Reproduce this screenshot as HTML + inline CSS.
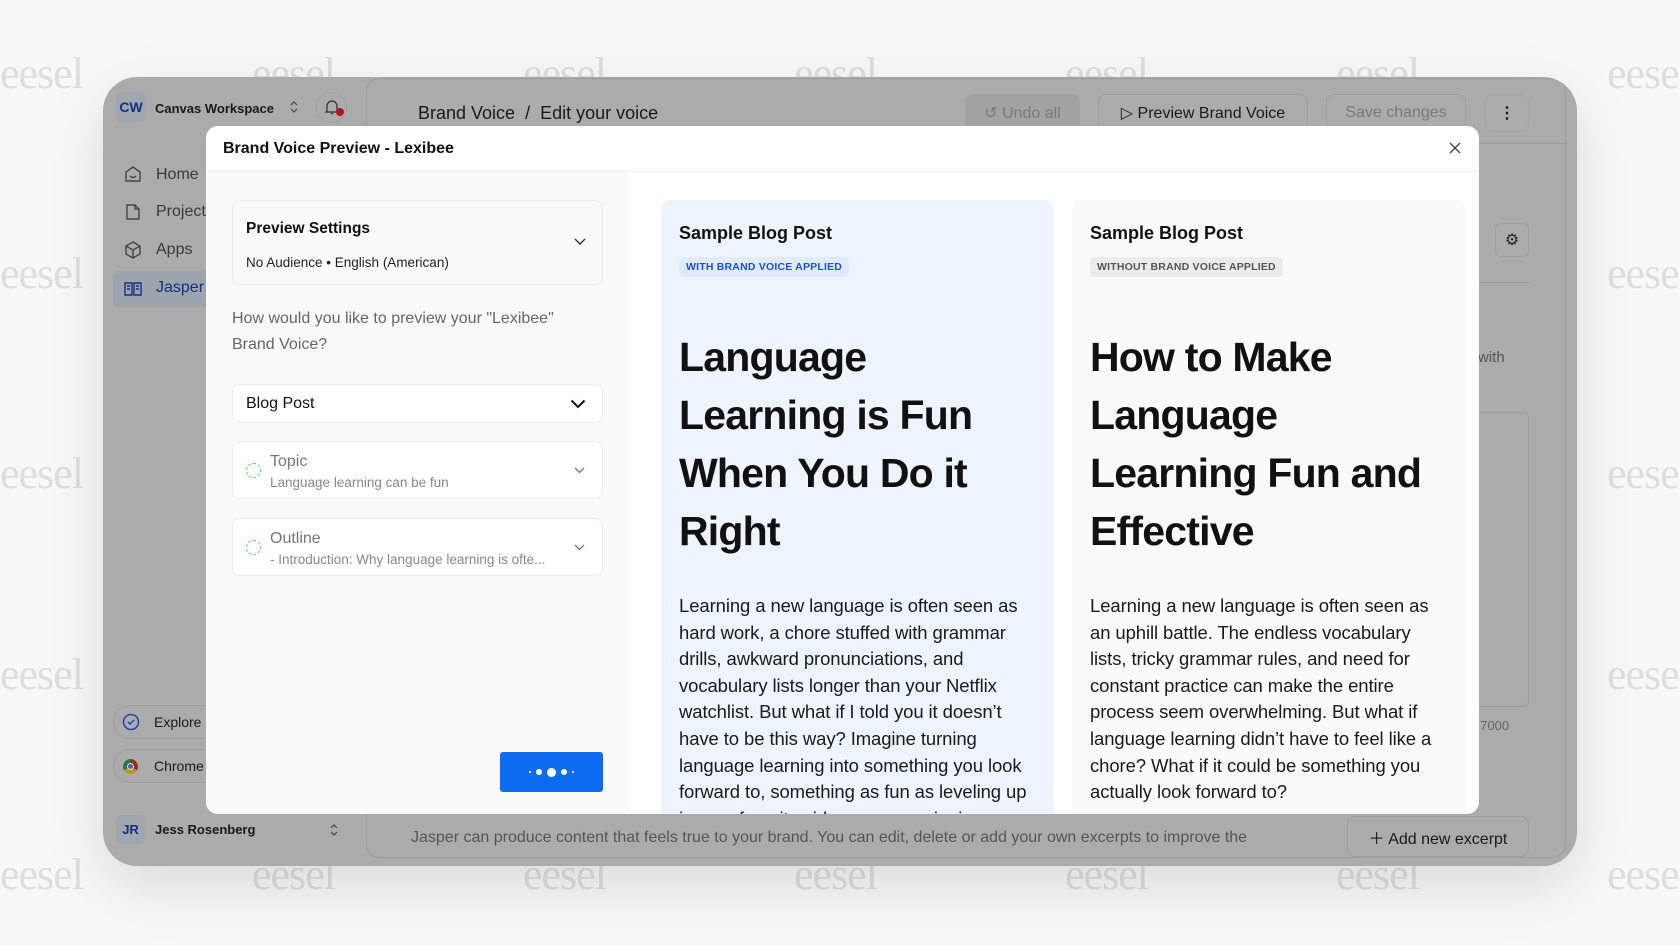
<!DOCTYPE html>
<html><head><meta charset="utf-8"><style>
*{box-sizing:border-box;margin:0;padding:0}
body{width:1680px;height:945px;overflow:hidden;background:#f8f8f7;font-family:"Liberation Sans",sans-serif;position:relative;color:#111}
.a{position:absolute}
.wm{position:absolute;font-family:"Liberation Serif",serif;font-size:44px;color:#dedede;letter-spacing:-1px}
.win{position:absolute;left:103px;top:77px;width:1474px;height:789px;background:#ababab;border-radius:34px;box-shadow:0 20px 60px rgba(0,0,0,.12);overflow:hidden}
.t{position:absolute;white-space:nowrap}
.btn{position:absolute;border-radius:8px;border:1px solid #9f9f9f;font-size:16px;display:flex;align-items:center;justify-content:center;gap:8px}
.modal{position:absolute;left:206px;top:126px;width:1273px;height:688px;background:#fff;border-radius:12px;overflow:hidden}
.card{position:absolute;border:1px solid #ececec;border-radius:8px;background:#fff}
.dash{position:absolute;width:15px;height:15px;border:1.5px dashed #52d45a;border-radius:50%}
.chev{position:absolute}
.blog{position:absolute;top:74px;width:393px;height:640px;border-radius:10px;padding:23px 17px 21px 18px}
.blog h3{font-size:18px;font-weight:600;margin-bottom:13px}
.badge{display:inline-block;font-size:10.5px;font-weight:700;padding:4px 7px;border-radius:4px;letter-spacing:.2px}
.blog h1{font-size:41px;font-weight:700;line-height:58px;margin-top:51px;letter-spacing:-.8px}
.blog p{font-size:18.5px;line-height:26.6px;margin-top:33px;color:#1a1a1a;letter-spacing:-.1px}
</style></head><body>
<div class="wm" style="left:0;top:48px">eesel</div>
<div class="wm" style="left:0;top:248px">eesel</div>
<div class="wm" style="left:0;top:448px">eesel</div>
<div class="wm" style="left:0;top:649px">eesel</div>
<div class="wm" style="left:0;top:849px">eesel</div>
<div class="wm" style="left:1607px;top:48px">eesel</div>
<div class="wm" style="left:1607px;top:248px">eesel</div>
<div class="wm" style="left:1607px;top:448px">eesel</div>
<div class="wm" style="left:1607px;top:649px">eesel</div>
<div class="wm" style="left:1607px;top:849px">eesel</div>
<div class="wm" style="left:252px;top:48px">eesel</div><div class="wm" style="left:523px;top:48px">eesel</div><div class="wm" style="left:794px;top:48px">eesel</div><div class="wm" style="left:1065px;top:48px">eesel</div><div class="wm" style="left:1336px;top:48px">eesel</div>
<div class="wm" style="left:252px;top:849px">eesel</div><div class="wm" style="left:523px;top:849px">eesel</div><div class="wm" style="left:794px;top:849px">eesel</div><div class="wm" style="left:1065px;top:849px">eesel</div><div class="wm" style="left:1336px;top:849px">eesel</div>

<div class="win">
 <div class="a" style="left:13px;top:15px;width:30px;height:30px;background:#9fa6b0;border-radius:5px;color:#13307a;font-size:14px;font-weight:700;display:flex;align-items:center;justify-content:center">CW</div>
 <div class="t" style="left:52px;top:24px;font-size:13px;font-weight:700;color:#1a1a1a">Canvas Workspace</div>
 <svg class="a" style="left:186px;top:23px" width="10" height="14"><path d="M2 5l3-3 3 3M2 9l3 3 3-3" fill="none" stroke="#444" stroke-width="1.2"/></svg>
 <div class="a" style="left:213px;top:15px;width:31px;height:31px;border-radius:50%;border:1px solid #9f9f9f"></div>
 <svg class="a" style="left:221px;top:21px" width="16" height="18"><path d="M3 13V8a5 5 0 0 1 10 0v5l1 1H2zM7 15.5h2" fill="none" stroke="#333" stroke-width="1.3"/></svg>
 <div class="a" style="left:233px;top:31px;width:8px;height:8px;border-radius:50%;background:#b3141c"></div>
 <div class="a" style="left:263px;top:1px;width:1200px;height:780px;border:1px solid #9d9d9d;border-radius:14px"></div>
 <div class="t" style="left:315px;top:26px;font-size:18px;color:#1a1a1a">Brand Voice &nbsp;/&nbsp; Edit your voice</div>
 <div class="btn" style="left:862px;top:17px;width:115px;height:38px;background:#a2a2a2;border-color:#a2a2a2;color:#7a7a7a">↺ Undo all</div>
 <div class="btn" style="left:995px;top:17px;width:210px;height:38px;color:#1a1a1a">▷ Preview Brand Voice</div>
 <div class="btn" style="left:1223px;top:17px;width:140px;height:38px;color:#7a7a7a">Save changes</div>
 <div class="btn" style="left:1382px;top:17px;width:44px;height:38px;color:#1a1a1a;border-color:#a5a5a5;font-weight:700">⋮</div>
 <div class="a" style="left:264px;top:66px;width:1200px;height:1px;background:#9d9d9d"></div>
 <div class="t" style="left:53px;top:89px;font-size:16px;color:#3a3a3a">Home</div>
 <div class="t" style="left:53px;top:126px;font-size:16px;color:#3a3a3a">Projects</div>
 <div class="t" style="left:53px;top:164px;font-size:16px;color:#3a3a3a">Apps</div>
 <div class="a" style="left:10px;top:194px;width:120px;height:36px;background:#9ea4ad;border-radius:6px"></div>
 <div class="t" style="left:53px;top:202px;font-size:16px;color:#143080">Jasper</div>
 <svg class="a" style="left:21px;top:88px" width="18" height="18"><path d="M2 7l7-5 7 5v9H2z M6 11q3 3 6 0" fill="none" stroke="#444" stroke-width="1.4"/></svg>
 <svg class="a" style="left:21px;top:126px" width="18" height="18"><path d="M3 2h8l4 4v10H3z M11 2v4h4" fill="none" stroke="#444" stroke-width="1.4"/></svg>
 <svg class="a" style="left:21px;top:164px" width="18" height="18"><path d="M9 1l7 4v8l-7 4-7-4V5z M2 5l7 4 7-4 M9 9v8" fill="none" stroke="#444" stroke-width="1.4"/></svg>
 <svg class="a" style="left:21px;top:203px" width="18" height="18"><path d="M1 3h7v12H1z M10 3h7v12h-7z M3 6h3M3 9h3M12 6h3M12 9h3" fill="none" stroke="#143080" stroke-width="1.4"/></svg>
 <div class="a" style="left:10px;top:628px;width:120px;height:34px;border:1px solid #9f9f9f;border-radius:17px"></div>
 <svg class="a" style="left:19px;top:636px" width="18" height="18"><circle cx="9" cy="9" r="7.5" fill="none" stroke="#1d46b0" stroke-width="1.5"/><path d="M6 9l2 2 4-4" fill="none" stroke="#1d46b0" stroke-width="1.5"/></svg>
 <div class="t" style="left:51px;top:637px;font-size:14px;color:#1a1a1a">Explore</div>
 <div class="a" style="left:10px;top:672px;width:120px;height:34px;border:1px solid #9f9f9f;border-radius:17px"></div>
 <div class="a" style="left:20px;top:682px;width:15px;height:15px;border-radius:50%;background:conic-gradient(#9e2a22 0 120deg,#b99420 120deg 240deg,#2a7a3a 240deg)"></div>
 <div class="a" style="left:24px;top:686px;width:7px;height:7px;border-radius:50%;background:#3f66a8;border:1px solid #ddd"></div>
 <div class="t" style="left:51px;top:681px;font-size:14px;color:#1a1a1a">Chrome</div>
 <div class="a" style="left:13px;top:738px;width:29px;height:29px;background:#9fa6b0;border-radius:5px;color:#13307a;font-size:13px;font-weight:700;display:flex;align-items:center;justify-content:center">JR</div>
 <div class="t" style="left:52px;top:745px;font-size:13px;font-weight:700;color:#1a1a1a">Jess Rosenberg</div>
 <svg class="a" style="left:226px;top:746px" width="10" height="14"><path d="M2 5l3-3 3 3M2 9l3 3 3-3" fill="none" stroke="#444" stroke-width="1.2"/></svg>
 <div class="a" style="left:1392px;top:146px;width:34px;height:34px;border:1px solid #9f9f9f;border-radius:6px;display:flex;align-items:center;justify-content:center;font-size:16px;color:#222">⚙</div>
 <div class="a" style="left:1375px;top:205px;width:51px;height:1px;background:#9d9d9d"></div>
 <div class="t" style="left:1375px;top:272px;font-size:15px;color:#555">with</div>
 <div class="a" style="left:1360px;top:335px;width:66px;height:295px;border:1px solid #9d9d9d;border-radius:6px"></div>
 <div class="t" style="left:1370px;top:641px;font-size:13px;color:#666">/ 7000</div>
 <div class="t" style="left:308px;top:752px;font-size:16px;color:#555">Jasper can produce content that feels true to your brand. You can edit, delete or add your own excerpts to improve the</div>
 <div class="btn" style="left:1244px;top:739px;width:182px;height:41px;color:#1a1a1a;font-size:16px">＋ Add new excerpt</div>
</div>

<div class="modal">
 <div class="t" style="left:17px;top:14px;font-size:16px;font-weight:600">Brand Voice Preview - Lexibee</div>
 <svg class="a" style="left:1243px;top:16px" width="12" height="12"><path d="M1 1l10 10M11 1L1 11" stroke="#444" stroke-width="1.4"/></svg>
 <div class="a" style="left:0;top:45px;width:1273px;height:1px;background:#efefef"></div>
 <div class="a" style="left:0;top:46px;width:424px;height:642px;background:#fafafa"></div>
 <div class="card" style="left:26px;top:74px;width:371px;height:85px;background:#fafafa"></div>
 <div class="t" style="left:40px;top:94px;font-size:15.5px;font-weight:600">Preview Settings</div>
 <div class="t" style="left:40px;top:129px;font-size:13.5px;color:#222">No Audience • English (American)</div>
 <svg class="chev" style="left:368px;top:112px" width="12" height="8"><path d="M1 1l5 5 5-5" fill="none" stroke="#333" stroke-width="1.4"/></svg>
 <div class="t" style="left:26px;top:180px;font-size:16px;color:#666;line-height:26px">How would you like to preview your "Lexibee"<br>Brand Voice?</div>
 <div class="card" style="left:26px;top:258px;width:371px;height:39px"></div>
 <div class="t" style="left:40px;top:269px;font-size:16px;color:#111">Blog Post</div>
 <svg class="chev" style="left:364px;top:273px" width="16" height="10"><path d="M1.5 1.5l6.5 6.5 6.5-6.5" fill="none" stroke="#111" stroke-width="2"/></svg>
 <div class="card" style="left:26px;top:315px;width:371px;height:58px"></div>
 <div class="dash" style="left:40px;top:337px"></div>
 <div class="t" style="left:64px;top:327px;font-size:16px;color:#777">Topic</div>
 <div class="t" style="left:64px;top:349px;font-size:13.5px;color:#888">Language learning can be fun</div>
 <svg class="chev" style="left:368px;top:341px" width="11" height="7"><path d="M1 1l4.5 4.5 4.5-4.5" fill="none" stroke="#777" stroke-width="1.3"/></svg>
 <div class="card" style="left:26px;top:392px;width:371px;height:58px"></div>
 <div class="dash" style="left:40px;top:414px"></div>
 <div class="t" style="left:64px;top:404px;font-size:16px;color:#777">Outline</div>
 <div class="t" style="left:64px;top:426px;font-size:13.5px;color:#888">- Introduction: Why language learning is ofte...</div>
 <svg class="chev" style="left:368px;top:418px" width="11" height="7"><path d="M1 1l4.5 4.5 4.5-4.5" fill="none" stroke="#777" stroke-width="1.3"/></svg>
 <div class="a" style="left:294px;top:626px;width:103px;height:40px;background:#0b6cf0;border-radius:3px;display:flex;align-items:center;justify-content:center;gap:5px">
  <i style="width:2px;height:2px;background:#fff;border-radius:50%"></i><i style="width:6px;height:6px;background:#fff;border-radius:50%"></i><i style="width:9px;height:9px;background:#fff;border-radius:50%"></i><i style="width:6px;height:6px;background:#fff;border-radius:50%"></i><i style="width:2px;height:2px;background:#fff;border-radius:50%"></i></div>

 <div class="blog" style="left:455px;background:#edf4fe">
  <h3>Sample Blog Post</h3>
  <span class="badge" style="background:#e0ecfd;color:#1f4fd1">WITH BRAND VOICE APPLIED</span>
  <h1>Language Learning is Fun When You Do it Right</h1>
  <p>Learning a new language is often seen as hard work, a chore stuffed with grammar drills, awkward pronunciations, and vocabulary lists longer than your Netflix watchlist. But what if I told you it doesn’t have to be this way? Imagine turning language learning into something you look forward to, something as fun as leveling up in your favorite video game or singing</p>
 </div>
 <div class="blog" style="left:866px;background:#fafafa">
  <h3>Sample Blog Post</h3>
  <span class="badge" style="background:#ececec;color:#555">WITHOUT BRAND VOICE APPLIED</span>
  <h1>How to Make Language Learning Fun and Effective</h1>
  <p>Learning a new language is often seen as an uphill battle. The endless vocabulary lists, tricky grammar rules, and need for constant practice can make the entire process seem overwhelming. But what if language learning didn’t have to feel like a chore? What if it could be something you actually look forward to?</p>
 </div>
</div>
</body></html>
